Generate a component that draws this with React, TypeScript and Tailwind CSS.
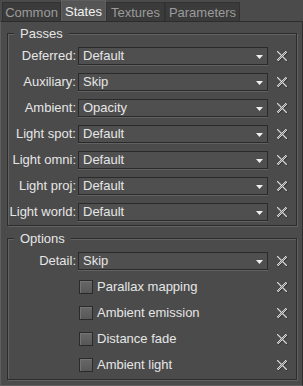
import React from "react";

const passes: [string, string][] = [
  ["Deferred", "Default"],
  ["Auxiliary", "Skip"],
  ["Ambient", "Opacity"],
  ["Light spot", "Default"],
  ["Light omni", "Default"],
  ["Light proj", "Default"],
  ["Light world", "Default"],
];

const checks = ["Parallax mapping", "Ambient emission", "Distance fade", "Ambient light"];

const N = 10;
const onPx = (x: number, y: number) =>
  x >= 0 && y >= 0 && x < N && y < N && (Math.abs(x - y) <= 1 || Math.abs(x + y - (N - 1)) <= 1);

const xPixels: { x: number; y: number; c: string }[] = [];
for (let y = 0; y <= N; y++) {
  for (let x = 0; x <= N; x++) {
    if (onPx(x, y)) {
      xPixels.push({ x, y, c: (x + y) % 2 === 0 ? "#d4d4d4" : "#7e7e7e" });
    } else if (onPx(x - 1, y - 1)) {
      xPixels.push({ x, y, c: "#3e3e3e" });
    }
  }
}

function XIcon() {
  return (
    <svg width="11" height="11" viewBox="0 0 11 11" className="block" shapeRendering="crispEdges">
      {xPixels.map((p, i) => (
        <rect key={i} x={p.x} y={p.y} width="1" height="1" fill={p.c} />
      ))}
    </svg>
  );
}

function Combo({ value }: { value: string }) {
  return (
    <div className="w-[190px] h-[18px] border border-[#2a2a2a] bg-[#4f4f4f] shadow-[0_1px_0_#626262] flex items-center pl-[4px] pr-[4px]">
      <span className="flex-1 leading-[16px]">{value}</span>
      <svg width="7" height="4" viewBox="0 0 7 4" className="block mt-[1px]">
        <polygon points="0,0 7,0 3.5,4" fill="#f0f0f0" />
      </svg>
    </div>
  );
}

function Row({ label, children }: { label?: string; children: React.ReactNode }) {
  return (
    <div className="flex items-center h-[18px]">
      <div className="w-[68px] text-right whitespace-nowrap leading-[16px]">{label ? `${label}:` : ""}</div>
      <div className="ml-[2px] w-[190px] flex items-center">{children}</div>
      <div className="ml-[9px] mt-[1px]">
        <XIcon />
      </div>
    </div>
  );
}

function Check({ text }: { text: string }) {
  return (
    <div className="flex items-center ml-[1px]">
      <div className="w-[14px] h-[14px] border border-[#2a2a2a] bg-gradient-to-b from-[#686868] to-[#575757] shadow-[inset_1px_1px_0_#747474]" />
      <span className="ml-[4px] leading-[16px] whitespace-nowrap">{text}</span>
    </div>
  );
}

function Group({ title, children, className }: { title: string; children: React.ReactNode; className: string }) {
  return (
    <fieldset
      className={`w-[290px] border border-[#2c2c2c] shadow-[inset_1px_1px_0_#626262,1px_1px_0_#626262] pl-0 ${className}`}
    >
      <legend className="ml-[6px] px-[6px] leading-[15px] bg-[#4b4b4b]">{title}</legend>
      {children}
    </fieldset>
  );
}

const tabs = [
  { name: "Common", w: "w-[59px]", sel: false },
  { name: "States", w: "w-[45px]", sel: true },
  { name: "Textures", w: "w-[59px]", sel: false },
  { name: "Parameters", w: "w-[75px]", sel: false },
];

export default function App() {
  return (
    <div className="w-[303px] h-[386px] bg-[#4b4b4b] text-[#e6e6e6] text-[13px] font-['Liberation_Sans',Arial,sans-serif] overflow-hidden">
      <div className="h-[21px] flex items-end pl-[2px]">
        {tabs.map((t) =>
          t.sel ? (
            <div
              key={t.name}
              className={`${t.w} h-[21px] bg-[#555555] border-x border-t border-[#5f5f5f] text-[#f2f2f2] flex items-center justify-center leading-[15px]`}
            >
              {t.name}
            </div>
          ) : (
            <div
              key={t.name}
              className={`${t.w} h-[19px] bg-[#3b3b3b] border-x border-t border-[#323232] text-[#9c9c9c] flex items-center justify-center leading-[15px]`}
            >
              {t.name}
            </div>
          )
        )}
      </div>
      <div className="w-[303px] h-[365px] border-t border-[#2c2c2c] border-l border-l-[#5e5e5e] border-r border-r-[#2c2c2c] border-b border-b-[#5e5e5e] pl-[6px] pt-[4px]">
        <Group title="Passes" className="pt-[6px] pb-[4px]">
          <div className="flex flex-col gap-[8px]">
            {passes.map(([l, v]) => (
              <Row key={l} label={l}>
                <Combo value={v} />
              </Row>
            ))}
          </div>
        </Group>
        <Group title="Options" className="mt-[5px] pt-[6px] pb-[5px]">
          <div className="flex flex-col gap-[8px]">
            <Row label="Detail">
              <Combo value="Skip" />
            </Row>
            {checks.map((c) => (
              <Row key={c}>
                <Check text={c} />
              </Row>
            ))}
          </div>
        </Group>
      </div>
    </div>
  );
}
